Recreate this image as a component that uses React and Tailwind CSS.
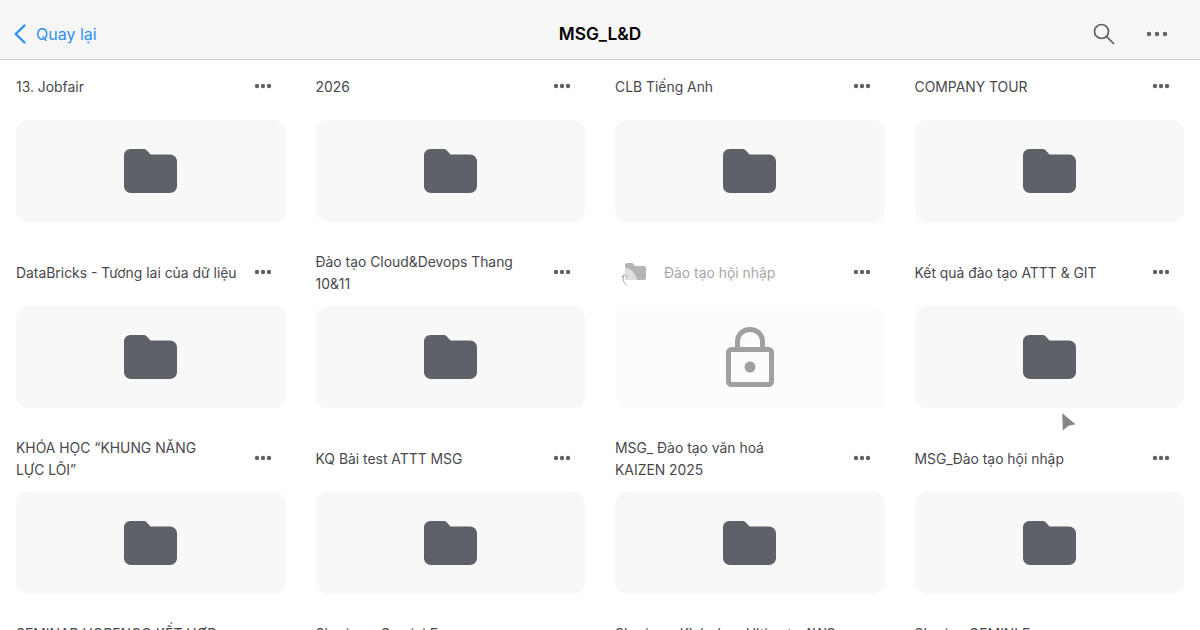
import React from 'react';

const folders = [
  { lines: ['13. Jobfair'] },
  { lines: ['2026'] },
  { lines: ['CLB Tiếng Anh'] },
  { lines: ['COMPANY TOUR'] },
  { lines: ['DataBricks - Tương lai của dữ liệu'] },
  { lines: ['Đào tạo Cloud&Devops Thang', '10&11'] },
  { lines: ['Đào tạo hội nhập'], locked: true },
  { lines: ['Kết quả đào tạo ATTT & GIT'] },
  { lines: ['KHÓA HỌC “KHUNG NĂNG', 'LỰC LÕI”'] },
  { lines: ['KQ Bài test ATTT MSG'] },
  { lines: ['MSG_ Đào tạo văn hoá', 'KAIZEN 2025'] },
  { lines: ['MSG_Đào tạo hội nhập'] },
  { lines: ['SEMINAR HOPENCO KẾT HỢP', '\u00a0'] },
  { lines: ['Sharing - Gemini E', '\u00a0'] },
  { lines: ['Sharing - Khóa học Ultimate AWS', '\u00a0'] },
  { lines: ['Sharing GEMINI E', '\u00a0'] },
];

const Dots = ({ big }) => (
  <svg width={big ? 22 : 18} height="6" viewBox={big ? '0 0 22 6' : '0 0 18 6'} className="text-[#5f6168] fill-current shrink-0">
    {big ? (
      <>
        <circle cx="3" cy="3" r="2.2" />
        <circle cx="11" cy="3" r="2.2" />
        <circle cx="19" cy="3" r="2.2" />
      </>
    ) : (
      <>
        <circle cx="3" cy="3" r="2.2" />
        <circle cx="9" cy="3" r="2.2" />
        <circle cx="15" cy="3" r="2.2" />
      </>
    )}
  </svg>
);

const FolderIcon = () => (
  <svg width="53" height="44" viewBox="0 0 53 44" className="text-[#5f6168] fill-current">
    <path d="M6.5 0H19.5C21 0 22.2 0.6 23.1 1.7L26.5 5.5H46C49.9 5.5 53 8.6 53 12.5V37C53 40.9 49.9 44 46 44H7C3.1 44 0 40.9 0 37V6.5C0 2.9 2.9 0 6.5 0Z" />
  </svg>
);

const LockIcon = () => (
  <svg width="48" height="60" viewBox="0 0 48 60" fill="none" className="text-[#a0a0a0]">
    <path d="M11.5 22V14.5C11.5 7.6 17 2.5 24 2.5C31 2.5 36.5 7.6 36.5 14.5V22" stroke="currentColor" strokeWidth="5" />
    <rect x="2.5" y="22.5" width="43" height="35" rx="3" stroke="currentColor" strokeWidth="5" />
    <circle cx="24" cy="40" r="5.5" fill="currentColor" />
  </svg>
);

const SyncFolder = () => (
  <svg width="26" height="28" viewBox="0 0 26 28" fill="none" className="shrink-0">
    <path d="M4 7C4 5.9 4.9 5 6 5H11.5L14 8H23C24.1 8 25 8.9 25 10V20C25 21.1 24.1 22 23 22H6C4.9 22 4 21.1 4 20Z" fill="#b4b4b4" />
    <path d="M4 9.5C10 10.5 15 15.5 16 22H6C4.9 22 4 21.1 4 20Z" fill="#e0e0e0" />
    <path d="M3.2 16.5C1.2 20.5 2 24.5 5.5 27" stroke="#a4a4a4" strokeWidth="1" strokeLinecap="round" />
    <path d="M0.8 19.5L3.2 16.5L6.5 18.8" stroke="#a4a4a4" strokeWidth="1" strokeLinecap="round" strokeLinejoin="round" />
  </svg>
);

const FolderTile = ({ lines, locked }) => (
  <div>
    <div className="h-11 flex items-center justify-between pr-[14px] mb-3">
      <div className="flex items-center min-w-0">
        {locked && (
          <span className="ml-[6px] mr-[17px] flex">
            <SyncFolder />
          </span>
        )}
        <div className={`pt-px text-[13.9px] leading-[22px] whitespace-nowrap ${locked ? 'text-[#a6a6a8]' : 'text-[#48484c]'}`}>
          {lines.map((line, i) => (
            <div key={i}>{line}</div>
          ))}
        </div>
      </div>
      <Dots />
    </div>
    <div className={`h-[102px] rounded-xl flex items-center justify-center ${locked ? 'bg-[#fcfcfc]' : 'bg-[#f8f8f8]'}`}>
      {locked ? <LockIcon /> : <FolderIcon />}
    </div>
  </div>
);

export default function App() {
  return (
    <div className="relative h-[630px] overflow-hidden bg-white font-['Inter',sans-serif]">
      <header className="h-[60px] pt-[9px] bg-[#f6f6f7] border-b border-[#cfcfcf] flex items-center justify-between pl-[14px] pr-[32px] relative">
        <div className="flex items-center text-[#2f8ff0]">
          <svg width="12" height="20" viewBox="0 0 12 20" fill="none" stroke="currentColor" strokeWidth="2.4" strokeLinecap="round" strokeLinejoin="round">
            <path d="M10.5 1.5L1.7 10L10.5 18.5" />
          </svg>
          <span className="ml-[10px] text-[16px]">Quay lại</span>
        </div>
        <h1 className="absolute left-0 right-0 text-center text-[17.3px] font-semibold text-black">MSG_L&amp;D</h1>
        <div className="flex items-center gap-[31px]">
          <svg width="22" height="22" viewBox="0 0 22 22" fill="none" stroke="#5f6168" strokeWidth="1.7" strokeLinecap="round">
            <circle cx="8.5" cy="8.5" r="7" />
            <path d="M13.6 13.6L20.5 20.5" />
          </svg>
          <Dots big />
        </div>
      </header>
      <div className="grid grid-cols-4 gap-x-[30px] gap-y-[28px] px-4 pt-1">
        {folders.map((f, i) => (
          <FolderTile key={i} lines={f.lines} locked={f.locked} />
        ))}
      </div>
      {/* pointer over the grid */}
      <svg width="14" height="18" viewBox="0 0 14 18" className="absolute left-[1062px] top-[413px]">
        <path d="M0.3 0.3L13.5 11.3L6.5 12.8L0.8 17.5Z" fill="#85868a" />
      </svg>
    </div>
  );
}
